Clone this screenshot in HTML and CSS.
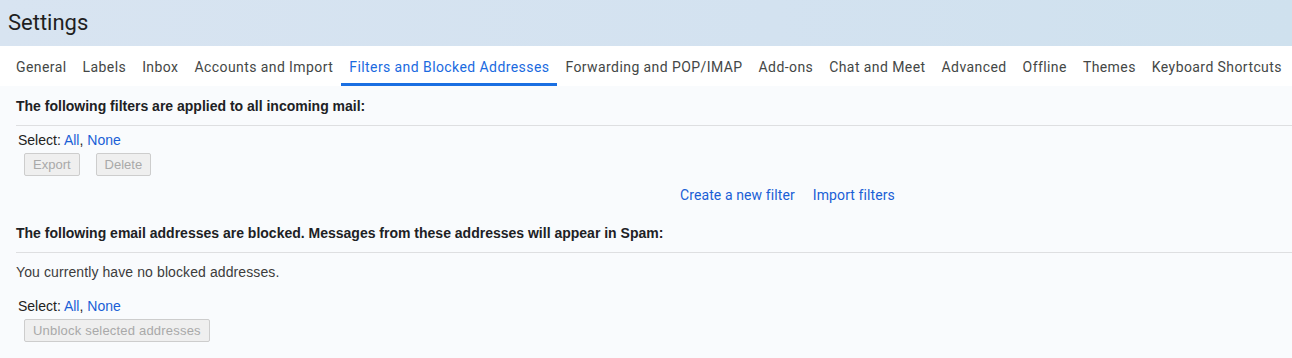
FILE: index.html
```html
<!DOCTYPE html>
<html lang="en">
<head>
  <meta charset="UTF-8">
  <title>Settings</title>
  <link rel="stylesheet" href="styles.css">
</head>
<body>
  <div class="header">
    <h1>Settings</h1>
  </div>

  <!-- Settings tabs -->
  <div class="tabs">
    <a class="tab">General</a>
    <a class="tab">Labels</a>
    <a class="tab">Inbox</a>
    <a class="tab">Accounts and Import</a>
    <a class="tab active">Filters and Blocked Addresses</a>
    <a class="tab">Forwarding and POP/IMAP</a>
    <a class="tab">Add-ons</a>
    <a class="tab">Chat and Meet</a>
    <a class="tab">Advanced</a>
    <a class="tab">Offline</a>
    <a class="tab">Themes</a>
    <a class="tab">Keyboard Shortcuts</a>
  </div>

  <div class="content">
    <!-- Filters -->
    <div class="section-title">The following filters are applied to all incoming mail:</div>
    <div class="select-row">Select: <a>All</a>, <a>None</a></div>
    <div class="button-row">
      <button class="btn" disabled>Export</button>
      <button class="btn" disabled>Delete</button>
    </div>
    <div class="filter-links">
      <a>Create a new filter</a>
      <a>Import filters</a>
    </div>

    <!-- Blocked addresses -->
    <div class="section-title">The following email addresses are blocked. Messages from these addresses will appear in Spam:</div>
    <div class="empty-note">You currently have no blocked addresses.</div>
    <div class="select-row">Select: <a>All</a>, <a>None</a></div>
    <div class="button-row">
      <button class="btn wide" disabled>Unblock selected addresses</button>
    </div>
  </div>
</body>
</html>
```

FILE: styles.css
```css
body {
  margin: 0;
  padding: 0;
  font-family: 'Liberation Sans', Arial, sans-serif;
  background-color: #f9fbfd;
  color: #222;
  height: 358px;
  overflow: hidden;
}
.header {
  height: 46px;
  background: linear-gradient(90deg, #d8e4f1 0%, #d3e2f0 60%, #cfe1ee 100%);
  display: flex;
  align-items: center;
  padding-left: 8px;
}
.header h1 {
  margin: 0;
  font-family: Roboto, 'Open Sans', sans-serif;
  font-weight: 400;
  font-size: 22px;
  color: #1f1f1f;
  line-height: 1;
}
.tabs {
  display: flex;
  height: 40px;
  background: #ffffff;
  padding-left: 8px;
}
.tab {
  display: flex;
  align-items: center;
  padding: 4px 8px 0 8px;
  font-family: Roboto, 'Open Sans', sans-serif;
  font-size: 14px;
  letter-spacing: 0.42px;
  color: #444746;
  border-bottom: 3px solid transparent;
}
.tab.active {
  color: #1a6ae0;
  border-bottom-color: #1a6fe2;
}
.content {
  padding: 0 0 0 16px;
}
.section-title {
  font-weight: bold;
  font-size: 14px;
  color: #202124;
  padding: 12px 0 11px 0;
  line-height: 16px;
  border-bottom: 1px solid #dedfe1;
}
.select-row {
  font-size: 14px;
  line-height: 16px;
  margin-top: 6px;
  padding-left: 2px;
  color: #222;
}
.select-row a, .filter-links a {
  color: #1a5fd6;
}
.button-row {
  display: flex;
  gap: 16px;
  padding-left: 8px;
  margin-top: 5px;
}
.btn {
  font-family: 'Liberation Sans', Arial, sans-serif;
  font-size: 13px;
  height: 23px;
  padding: 0 8px;
  background: #efefef;
  border: 1px solid #cdcdcd;
  border-radius: 2px;
  color: #a9a9a9;
}
.btn.wide {
  letter-spacing: 0.2px;
}
.filter-links {
  display: flex;
  gap: 18px;
  padding-left: 664px;
  margin-top: 11px;
  margin-bottom: 10px;
  font-family: Roboto, 'Open Sans', sans-serif;
  font-size: 14px;
  letter-spacing: 0.1px;
  line-height: 16px;
}
.empty-note {
  font-size: 14px;
  line-height: 16px;
  color: #3c3c3c;
  letter-spacing: 0.1px;
  margin-top: 11px;
  margin-bottom: 18px;
}
```
